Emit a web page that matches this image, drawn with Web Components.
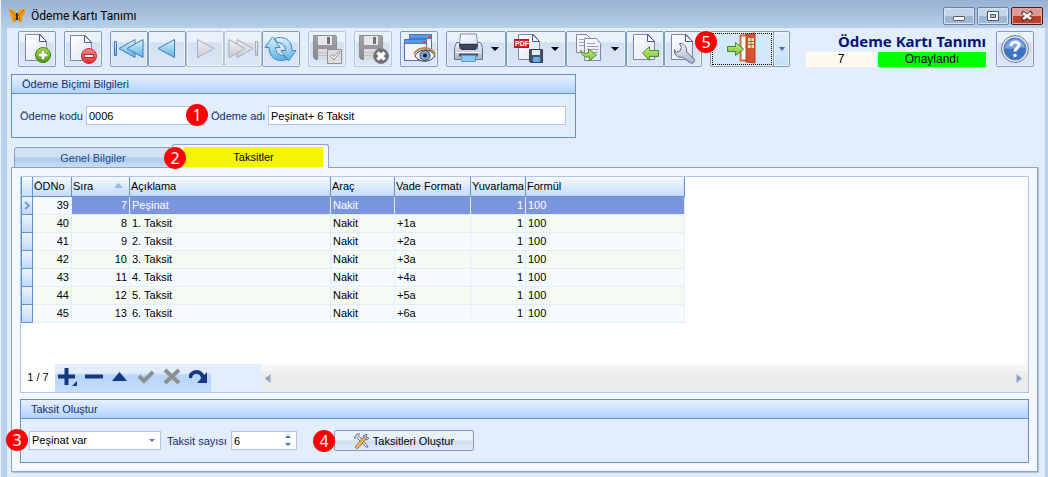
<!DOCTYPE html>
<html lang="tr">
<head>
<meta charset="utf-8">
<title>Ödeme Kartı Tanımı</title>
<style>
  body { margin: 0; background: #fff; font: 11px/14px "Liberation Sans", Arial, sans-serif; color: #000; }
</style>
</head>
<body>
<payment-card-window></payment-card-window>

<script>
const DEFS = `<defs>
  <linearGradient id="doc" x1="0" y1="0" x2="1" y2="1"><stop offset="0" stop-color="#fff"/><stop offset="1" stop-color="#dfe4f6"/></linearGradient>
  <linearGradient id="blue" x1="0" y1="0" x2="0" y2="1"><stop offset="0" stop-color="#dff3fd"/><stop offset="1" stop-color="#5cb0e6"/></linearGradient>
  <linearGradient id="gray" x1="0" y1="0" x2="0" y2="1"><stop offset="0" stop-color="#eceef1"/><stop offset="1" stop-color="#c9ced6"/></linearGradient>
  <linearGradient id="green" x1="0" y1="0" x2="0" y2="1"><stop offset="0" stop-color="#a6dd4e"/><stop offset="1" stop-color="#4a9a0c"/></linearGradient>
  <linearGradient id="leaf" x1="0" y1="0" x2="0" y2="1"><stop offset="0" stop-color="#c3e88a"/><stop offset="1" stop-color="#7fc03a"/></linearGradient>
  <linearGradient id="red" x1="0" y1="0" x2="0" y2="1"><stop offset="0" stop-color="#ff8d8d"/><stop offset="1" stop-color="#e8282c"/></linearGradient>
  <linearGradient id="steel" x1="0" y1="0" x2="0" y2="1"><stop offset="0" stop-color="#f1f3f9"/><stop offset="1" stop-color="#aab2c8"/></linearGradient>
  <linearGradient id="disk" x1="0" y1="0" x2="0" y2="1"><stop offset="0" stop-color="#a2a4a7"/><stop offset="1" stop-color="#87898c"/></linearGradient>
</defs>`;
const floppy = `<path d="M4.500 3.500h22l1 1v23h-21l-2-2z" fill="url(#disk)" stroke="#8c8e91"/><rect x="9" y="4" width="14" height="9" fill="#e6e7e8"/><rect x="18" y="5" width="3" height="7" fill="#6f7174"/><rect x="9" y="17" width="14" height="11" fill="#d9dadc"/><path d="M9 20.500h14M9 23.500h14" stroke="#bfc1c4"/>`;
const ICONS = {
  add: `<path d="M6.500 2.500h15l6 7v19h-21z" fill="url(#doc)" stroke="#7f84b3"/><path d="M20.500 2.500v7h7z" fill="#fff" stroke="#4c549c"/><circle cx="24" cy="23" r="7.500" fill="url(#green)" stroke="#3f7d12"/><path d="M24 18v10M19 23h10" stroke="#3f7d12" stroke-width="4"/><path d="M24 18.500v9M19.500 23h9" stroke="#fff" stroke-width="3"/>`,
  remove: `<path d="M5.500 3.500h15l6 7v18h-21z" fill="url(#doc)" stroke="#7f84b3"/><path d="M19.500 3.500v7h7z" fill="#fff" stroke="#4c549c"/><circle cx="24" cy="24" r="7.500" fill="url(#red)" stroke="#c52a30"/><rect x="19.500" y="22.500" width="9" height="3" fill="#fff" stroke="#c52a30"/>`,
  first: `<g stroke="#3f7cbc" fill="url(#blue)" stroke-linejoin="round"><rect x="3.500" y="9.500" width="2" height="14"/><path d="M24 7.500v18L8 16.500z"/><path d="M32 7.500v18L16 16.500z"/></g>`,
  prev: `<path d="M25.500 7.500v18L9 16.500z" stroke="#3f7cbc" fill="url(#blue)" stroke-linejoin="round"/>`,
  next: `<path d="M10.500 7.500v18L27 16.500z" stroke="#a9adb4" fill="url(#gray)" stroke-linejoin="round"/>`,
  last: `<g stroke="#a9adb4" fill="url(#gray)" stroke-linejoin="round"><rect x="30.500" y="9.500" width="2" height="14"/><path d="M12 7.500v18l16-9z"/><path d="M4 7.500v18l16-9z"/></g>`,
  refresh: `<g fill="url(#blue)" stroke="#3f86bd" stroke-linejoin="round"><path d="M9.500 5L17 15.500h-4.500c0 5 3.500 8 8 8l3 4C13 31 6 25 6 15.500H2z"/><path d="M25.500 29L18 18.500h4.500c0-5-3.500-8-8-8l-3-4C22 3 29 9 29 18.500h4z"/></g>`,
  saveok: floppy + `<rect x="18.500" y="17.500" width="14" height="14" fill="#dcdddf" stroke="#8f9194"/><path d="M21.500 24l3.500 4 6-8-1.500-.5-4.500 5-2-2z" fill="#fff" stroke="#8a8c8f"/>`,
  savex: floppy + `<circle cx="26" cy="24" r="7.500" fill="#6e7073" stroke="#85878a"/><path d="M22.500 20.500l7 7M29.500 20.500l-7 7" stroke="#fff" stroke-width="3.500"/>`,
  preview: `<g stroke="#5a6fb6"><rect x="8.500" y="2.500" width="22" height="16" fill="#edf3fc"/><path d="M8.500 2.500h22v4h-22z" fill="#4e9dec"/><rect x="3.500" y="7.500" width="22" height="21" fill="#f2f5fd"/><path d="M3.500 7.500h22v4h-22z" fill="#4e9dec"/></g><path d="M27 4h3v2h-3zM22 9h3v2h-3z" fill="#e94545"/><path d="M14 24c4-8 16-8 20 0-5 7-16 7-20 0z" fill="#f1f4fa" stroke="#2f3848"/><path d="M13 22c5-8 17-8 21 0" fill="none" stroke="#c28a4e" stroke-width="2"/><circle cx="24" cy="23.500" r="5" fill="#84a3c8" stroke="#33445c"/><circle cx="24" cy="23.500" r="2" fill="#152033"/>`,
  print: `<path d="M12.500 12l1-10h16l1 10z" fill="url(#doc)" stroke="#8188b5"/><path d="M9.500 10.500h3v6h18v-6h3l2 5v12h-28v-12z" fill="url(#steel)" stroke="#66708f"/><path d="M12.500 12.500h18l-2 5h-14z" fill="#3e465c" stroke="#2d354b"/><path d="M9 20.500h25" stroke="#fff"/><path d="M12 21.500h19v3h-19z" fill="#4e5873"/><path d="M14.500 23.500h14v6h-14z" fill="#88c8f2" stroke="#5c9ccd"/>`,
  pdf: `<path d="M11.500 2.500h15l6 7v18h-21z" fill="url(#doc)" stroke="#7f84b3"/><path d="M25.500 2.500v7h7z" fill="#fff" stroke="#4c549c"/><rect x="7.500" y="7.500" width="14" height="8" fill="#d3282f" stroke="#a91c22"/><text x="8" y="14" font-family="Liberation Sans" font-weight="700" font-size="7" fill="#fff">PDF</text><path d="M22.500 17.500h13v13h-12l-1-1z" fill="#47526a" stroke="#364057"/><rect x="25" y="18" width="8" height="5" fill="#e4eaf6"/><rect x="26" y="25" width="7" height="5" fill="#5eb0ee"/>`,
  copy: `<g stroke="#7f84b3" fill="url(#doc)"><path d="M9.500 2.500h10l5 5v13h-15z"/><path d="M17.500 6.500h12l4 5v17h-16z"/></g><path d="M12 7.500h6M12 10.500h5M12 13.500h5M20 11.500h8M20 14.500h11M20 17.500h11M20 20.500h11" stroke="#9ba2ca"/><path d="M13.500 18c2 3 5 4 8 3v-4l8 6-7 6v-4c-5 1-8-2-9-7z" fill="url(#leaf)" stroke="#568f26" stroke-linejoin="round"/>`,
  import: `<path d="M6.500 2.500h15l6 7v18h-21z" fill="url(#doc)" stroke="#7f84b3"/><path d="M20.500 2.500v7h7z" fill="#fff" stroke="#4c549c"/><path d="M15.500 21l7-6.500v4h9v6h-9v4z" fill="url(#leaf)" stroke="#568f26" stroke-linejoin="round"/>`,
  wrench: `<path d="M6.500 2.500h15l6 7v18h-21z" fill="url(#doc)" stroke="#7f84b3"/><path d="M20.500 2.500v7h7z" fill="#fff" stroke="#4c549c"/><path d="M14.500 11.500l2 4-1.500 3.500-4 1.500-1.500-3c-1 5 3 9 8 7.500l8 6c3 1 5-2 3.500-4l-7.500-7c1-5-3-9-7-8.500z" fill="url(#steel)" stroke="#5b6a8d" stroke-linejoin="round"/>`,
  exit: `<path d="M16.500 3.500h9v25h-9z" fill="#fdfdfd" stroke="#dd6540" stroke-width="2"/><path d="M22 2l9-1v30l-9-1z" fill="#d6532f" stroke="#b54122"/><rect x="24" y="6" width="6" height="10" fill="#f3e3ac"/><path d="M27 6v10M24 9.500h6M24 12.500h6" stroke="#94703f"/><path d="M3.500 14.500h8v-4l8 6.500-8 6.500v-4h-8z" fill="url(#leaf)" stroke="#3f8a2f" stroke-linejoin="round"/>`,
  help: `<circle cx="18" cy="17" r="13.500" fill="#dfe4ee" stroke="#717c96"/><circle cx="18" cy="17" r="11" fill="#3c74c4" stroke="#5f80b9"/><path d="M8 16a10 9 0 0 1 20 0c-6-3-14 3-20 0z" fill="#7ba6e0"/><path d="M14 14c0-5 8-5 8-1 0 3-4 3-4 6.500" fill="none" stroke="#fff" stroke-width="3"/><circle cx="18" cy="23.500" r="1.800" fill="#fff"/>`
};
const icon = name => `<svg width="36" height="34" viewBox="0 0 36 34" aria-hidden="true">${DEFS}${ICONS[name]}</svg>`;

function define(name, html) {
  const template = document.createElement('template');
  customElements.define(name, class extends HTMLElement {
    connectedCallback() {
      if (this.shadowRoot) return;
      template.innerHTML = typeof html === 'function' ? html(this) : html;
      this.attachShadow({ mode: 'open' }).append(template.content.cloneNode(true));
    }
  });
}

define('step-badge', `
<style>
  :host { position: absolute; z-index: 2; display: grid; place-items: center; width: 22px; height: 22px; border-radius: 50%; background: #f00; color: #fff; font: 16px/22px "Noto Sans", "Open Sans", sans-serif; }
</style><slot></slot>`);

define('title-bar', `
<style>
  :host { display: flex; align-items: center; height: 28px; box-sizing: border-box; padding: 4px 5px 0 8px; background: linear-gradient(#98b1d0, #b7cfe8); font: 12px/16px Roboto, "Noto Sans", sans-serif; }
  h1 { flex: 1; margin: 0 0 0 6px; font: inherit; }
  .controls { display: flex; gap: 2px; }
  button { width: 32px; height: 18px; padding: 0; border: 1px solid #6b84a5; border-radius: 2px; background: linear-gradient(#c4d5e9 48%, #9fb7d3 52%); box-shadow: inset 0 0 0 1px #d6e3f1; display: grid; place-items: center; }
  button.close { border-color: #511a22; background: linear-gradient(#dd9a90 48%, #b8402c 52%); box-shadow: inset 0 0 0 1px #e4a69c; }
</style>
<svg width="16" height="16" viewBox="0 0 16 16" aria-hidden="true"><path d="M0 1c4 0 7 2 7.500 6C8.500 3 12 1 16 1c0 4-1 7-3 8 1 3-1 5-2 6-1-1-2-3-3-5-1 2-2 4-3 5-2-1-3-3-2-6C1 8 0 5 0 1z" fill="#f39a10"/><path d="M1 2l6 6M15 2L9 8M5 9l2 4M11 9l-1 4" stroke="#b0660f"/><path d="M8 5v7" stroke="#4a2a14" stroke-width="2"/></svg>
<h1><slot></slot></h1>
<div class="controls">
  <button aria-label="Simge durumuna küçült"><svg width="12" height="12"><rect x=".5" y="6.500" width="11" height="4" rx="1" fill="#fff" stroke="#4b5664"/></svg></button>
  <button aria-label="Ekranı kapla"><svg width="12" height="12"><path d="M.5 1.500h11v9h-11z" fill="#fff" stroke="#4b5664"/><path d="M3.500 4.500h5v3h-5z" fill="#a9bdd6" stroke="#4b5664"/></svg></button>
  <button class="close" aria-label="Kapat"><svg width="12" height="12"><path d="M1 2l10 8M11 2L1 10" stroke="#543238" stroke-width="4"/><path d="M2 3l8 6M10 3L2 9" stroke="#fff" stroke-width="2.500"/></svg></button>
</div>`);

define('tool-button', el => `
<style>
  :host { display: flex; flex: none; }
  button { display: flex; align-items: center; width: 38px; height: 36px; box-sizing: border-box; padding: 0; border: 1px solid #7e9bc6; border-radius: 2px; background: linear-gradient(#e9f1fa 28%, #d2e0f2 32%, #dbe7f7); box-shadow: inset 0 0 0 1px #edf4fc; }
  button:disabled { border-color: #b3c5df; }
  svg { flex: none; }
  :host([menu]) button { width: 60px; }
  :host([split]) button { width: 64px; background: #d4e8fc; outline: 1px dotted #000; outline-offset: -3px; border-radius: 2px 0 0 2px; justify-content: center; }
  :host([split]) button.drop { width: 17px; outline: 0; margin-left: -1px; background: linear-gradient(#e2f0fe, #c3def9); border-radius: 0 2px 2px 0; }
  .tri { margin-left: 8px; }
  .drop .tri { margin: 0; }
</style>
<button aria-label="${el.getAttribute('label')}" title="${el.getAttribute('label')}" ${el.hasAttribute('off') ? 'disabled' : ''}>${icon(el.getAttribute('icon'))}${el.hasAttribute('menu') ? '<svg class="tri" width="8" height="4" aria-hidden="true"><path d="M0 0h8L4 4z"/></svg>' : ''}</button>
${el.hasAttribute('split') ? '<button class="drop" aria-label="Çıkış seçenekleri"><svg class="tri" width="6" height="4" aria-hidden="true"><path d="M0 0h6L3 4z" fill="#4a6a9e"/></svg></button>' : ''}`);

define('main-toolbar', `
<style>
  :host { display: flex; gap: 8px; }
  .set { display: flex; }
  .exit { position: relative; }
  .exit step-badge { left: -15px; top: 0; }
</style>
<tool-button icon="add" label="Yeni"></tool-button>
<tool-button icon="remove" label="Sil"></tool-button>
<div class="set">
  <tool-button icon="first" label="İlk"></tool-button><tool-button icon="prev" label="Önceki"></tool-button><tool-button icon="next" label="Sonraki" off></tool-button><tool-button icon="last" label="Son" off></tool-button><tool-button icon="refresh" label="Yenile"></tool-button>
</div>
<tool-button icon="saveok" label="Kaydet" off></tool-button>
<tool-button icon="savex" label="Vazgeç" off></tool-button>
<tool-button icon="preview" label="Önizle"></tool-button>
<div class="set">
  <tool-button icon="print" label="Yazdır" menu></tool-button><tool-button icon="pdf" label="PDF kaydet" menu></tool-button><tool-button icon="copy" label="Kopyala" menu></tool-button><tool-button icon="import" label="İçe aktar"></tool-button><tool-button icon="wrench" label="Ayarlar"></tool-button>
</div>
<div class="exit"><tool-button icon="exit" label="Çıkış" split></tool-button><step-badge>5</step-badge></div>`);

define('record-status', `
<style>
  :host { display: grid; grid-template-columns: 70px 108px; gap: 0 2px; line-height: 15px; font-size: 12px; text-align: center; }
  h2 { grid-column: 1 / 3; margin: 0; height: 21px; font: bold 15px/21px "Noto Sans", "Open Sans", sans-serif; color: #001478; text-align: right; white-space: nowrap; }
  .no { background: #fffaf0; }
  .state { background: #0f0; }
</style>
<h2><slot></slot></h2>
<span class="no">7</span><span class="state">Onaylandı</span>`);

define('group-box', `
<style>
  :host { display: block; box-sizing: border-box; border: 1px solid #6592cf; background: #e2edfe; }
  h3 { margin: 0; height: 18px; padding-left: 10px; border-bottom: 1px solid #6592cf; font: inherit; line-height: 19px; color: #12306f; background: linear-gradient(#e5f0ff, #d0e3ff 45%, #b0d2ff); }
  .body { display: flex; align-items: center; height: 43px; box-sizing: border-box; }
</style>
<h3><slot name="title"></slot></h3>
<div class="body"><slot></slot></div>`);

const fieldCss = `
  :host { display: flex; align-items: center; position: relative; color: #12306f; }
  label { white-space: nowrap; flex: none; width: var(--label-width, auto); }
  input, select { box-sizing: border-box; width: 100%; height: 19px; margin: 0; padding: 0 2px; border: 1px solid #b0c6e6; border-radius: 0; background: #fff; color: #000; font: inherit; line-height: 17px; appearance: none; outline: 0; }
  input[type=number] { appearance: textfield; }
  input::-webkit-inner-spin-button { appearance: none; }
  .control { position: relative; flex: 1; display: flex; }
  .control svg { position: absolute; right: 6px; top: 3px; pointer-events: none; }
`;
define('text-field', el => `
<style>${fieldCss}</style>
<label for="f">${el.getAttribute('label')}</label><span class="control"><input id="f" value="${el.getAttribute('value')}"></span><slot></slot>`);

define('choice-field', el => `
<style>${fieldCss}</style>
<span class="control"><select aria-label="Peşinat"><option>${el.getAttribute('value')}</option></select>
<svg width="6" height="13"><path d="M0 5h6L3 8z" fill="#5277ae"/></svg></span><slot></slot>`);

define('number-field', el => `
<style>${fieldCss}</style>
<label for="n">${el.getAttribute('label')}</label><span class="control"><input id="n" type="number" value="${el.getAttribute('value')}">
<svg width="6" height="13"><path d="M0 4h6L3 1zM0 9h6l-3 3z" fill="#4f6f9f"/></svg></span>`);

define('action-button', `
<style>
  :host { display: block; position: relative; }
  button { display: flex; align-items: center; justify-content: center; gap: 3px; width: 100%; height: 21px; padding: 0; border: 1px solid #7f9bc4; border-radius: 2px; background: linear-gradient(#e8f0fa 45%, #d2e0f3 55%, #dfeafa); font: inherit; color: #000; white-space: nowrap; }
</style>
<button><svg width="16" height="16" viewBox="0 0 16 16" aria-hidden="true"><path d="M2 2l3 1 8 9 1 2-2 0-9-9z" fill="#dde2ea" stroke="#6c7585"/><path d="M1 6c-1-3 2-6 5-5M9 3l4-2-1 3 3 1-2 2-3-1z" fill="#c5cbd6" stroke="#6c7585"/><path d="M10 6L3 14" stroke="#a0692c" stroke-width="3.600" stroke-linecap="round"/><path d="M10 6L3 14" stroke="#f2bb6a" stroke-width="2" stroke-linecap="round"/></svg><slot></slot></button><slot name="badge"></slot>`);

define('page-tabs', `
<style>
  :host { display: flex; flex-direction: column; position: relative; }
  .strip { display: flex; align-items: flex-end; height: 24px; padding-left: 3px; margin-bottom: -1px; position: relative; z-index: 1; }
  button { font: inherit; box-sizing: border-box; padding: 0; border: 1px solid #8da2c6; border-radius: 3px 3px 0 0; color: #1f4894; width: 158px; height: 21px; background: linear-gradient(#d0e1f6 45%, #adcaec 55%, #c9dcf4); }
  button.on { width: 157px; height: 24px; padding: 2px 5px 1px 11px; border-bottom: 0; background: #f3f8fe; color: #000; }
  .on span { display: block; height: 20px; line-height: 20px; background: #f5f500; }
  .page { display: flex; flex-direction: column; gap: 6px; flex: 1; border: 1px solid #8da2c6; padding: 8px; background: #f3f8fe; box-shadow: 1px 1px 1px #b4c5df; }
  step-badge { left: 153px; top: 3px; }
</style>
<div class="strip" role="tablist"><button role="tab" aria-selected="false">Genel Bilgiler</button><button class="on" role="tab" aria-selected="true"><span>Taksitler</span></button></div>
<step-badge>2</step-badge>
<div class="page" role="tabpanel"><slot></slot></div>`);

const ROWS = [
  [39, 7, 'Peşinat', ''], [40, 8, '1. Taksit', '+1a'], [41, 9, '2. Taksit', '+2a'], [42, 10, '3. Taksit', '+3a'],
  [43, 11, '4. Taksit', '+4a'], [44, 12, '5. Taksit', '+5a'], [45, 13, '6. Taksit', '+6a']
];
define('installment-grid', `
<style>
  :host { display: flex; flex-direction: column; flex: 1; border: 1px solid #b0c6e6; background: #fff; }
  .scroll { flex: 1; overflow: hidden; }
  table { table-layout: fixed; width: 664px; border-collapse: separate; border-spacing: 0; }
  th, td { box-sizing: border-box; height: 18px; padding: 0 2px; line-height: 17px; white-space: nowrap; text-align: left; border-right: 1px solid #e2edfe; border-bottom: 1px solid #e2edfe; }
  thead th { height: 20px; padding: 0 1px; line-height: 19px; font-weight: 400; border-color: #6592cf; background: linear-gradient(#f4f9ff, #dcebff 50%, #c5dcfa); }
  th.sort { position: relative; }
  th.sort svg { position: absolute; right: 6px; top: 6px; }
  tbody th { padding: 0; border-color: #6592cf; background: linear-gradient(#eef5ff, #bfd9fb); }
  tbody th svg { display: block; margin: auto; }
  tr > :first-child { border-left: 1px solid #6592cf; }
  .num { text-align: right; }
  tbody tr { background: #f6fbff; }
  tbody tr:nth-child(even) { background: #f4fbf3; }
  .sel td:nth-child(n+3) { background: #7b96df; color: #fff; }
  footer { display: flex; align-items: stretch; height: 28px; }
  .pos { width: 34px; text-align: center; line-height: 27px; }
  .nav { display: flex; width: 206px; padding-bottom: 2px; box-sizing: border-box; background: linear-gradient(90deg, transparent 156px, #e2edfe 156px), linear-gradient(#e2edfe 30%, #b8d4fa 42%, #c6dcfa); }
  .nav button { width: 26px; padding: 0; border: 0; background: none; display: grid; place-items: center; }
  .bar { flex: 1; display: flex; align-items: center; justify-content: space-between; padding: 0 6px 0 4px; background: linear-gradient(#f8f8f8, #ebebeb 40%); }
</style>
<div class="scroll"><table>
<colgroup><col style="width:12px"><col style="width:39px"><col style="width:58px"><col style="width:201px"><col style="width:64px"><col style="width:76px"><col style="width:55px"><col style="width:159px"></colgroup>
<thead><tr><th></th><th>ÖDNo</th><th class="sort">Sıra<svg width="9" height="5" aria-hidden="true"><path d="M0 5h9L4.500 0z" fill="#8fbaf2"/></svg></th><th>Açıklama</th><th>Araç</th><th>Vade Formatı</th><th>Yuvarlama</th><th>Formül</th></tr></thead>
<tbody>${ROWS.map((r, i) => `<tr class="${i ? '' : 'sel'}"><th>${i ? '' : '<svg width="6" height="9" aria-hidden="true"><path d="M1 1l4 3.500L1 8" fill="none" stroke="#6c9ade" stroke-width="2"/></svg>'}</th><td class="num">${r[0]}</td><td class="num">${r[1]}</td><td>${r[2]}</td><td>Nakit</td><td>${r[3]}</td><td class="num">1</td><td>100</td></tr>`).join('')}</tbody>
</table></div>
<footer>
  <span class="pos">1 / 7</span>
  <div class="nav">
    <button aria-label="Ekle"><svg width="20" height="18"><path d="M8.500 0v17M0 8.500h17" stroke="#14387f" stroke-width="4"/><path d="M19 13v5h-5z" fill="#14387f"/></svg></button>
    <button aria-label="Sil"><svg width="18" height="18"><path d="M0 8.500h18" stroke="#14387f" stroke-width="4"/></svg></button>
    <button aria-label="Düzenle"><svg width="16" height="18"><path d="M0 13h15L7.500 4z" fill="#14387f"/></svg></button>
    <button aria-label="Onayla"><svg width="18" height="18"><path d="M2 8l5 5 9-9" fill="none" stroke="#8f9090" stroke-width="4"/></svg></button>
    <button aria-label="İptal"><svg width="18" height="18"><path d="M2 2l14 13M16 2L2 15" stroke="#8f9090" stroke-width="4"/></svg></button>
    <button aria-label="Yenile"><svg width="19" height="18"><path d="M1 10c1-8 12-8 13 0" fill="none" stroke="#14387f" stroke-width="4"/><path d="M18 4v11H8z" fill="#14387f"/></svg></button>
  </div>
  <div class="bar"><svg width="6" height="9" aria-hidden="true"><path d="M5.500 0v9L0 4.500z" fill="#93a3c8"/></svg><svg width="6" height="9" aria-hidden="true"><path d="M.5 0v9L6 4.500z" fill="#93a3c8"/></svg></div>
</footer>`);

define('payment-card-window', `
<style>
  :host { display: flex; flex-direction: column; min-height: 100vh; box-sizing: border-box; border-left: 1px solid #eef3f9; background: #bad1ea; }
  main { flex: 1; display: flex; flex-direction: column; margin: 0 3px 0 6px; padding: 3px 7px 5px 4px; background: #e2edfe; }
  header { display: flex; padding: 0 4px 0 7px; margin-bottom: 7px; }
  record-status { margin: 0 10px 0 auto; flex: none; }
  .info { width: 565px; max-width: 100%; margin-bottom: 6px; }
  .code { width: 185px; margin-left: 8px; --label-width: 66px; }
  .code step-badge { right: -3px; top: -2px; }
  .name { flex: 1; margin: 0 9px 0 6px; --label-width: 57px; }
  page-tabs { flex: 1; }
  .plan { width: 132px; margin-left: 8px; }
  .plan step-badge { left: -23px; top: -2px; }
  .count { width: 130px; margin-left: 6px; --label-width: 64px; }
  action-button { width: 140px; margin-left: 37px; }
  action-button step-badge { left: -21px; top: 0; }
</style>
<title-bar>Ödeme Kartı Tanımı</title-bar>
<main>
  <header><main-toolbar></main-toolbar><record-status>Ödeme Kartı Tanımı</record-status><tool-button icon="help" label="Yardım"></tool-button></header>
  <group-box class="info"><span slot="title">Ödeme Biçimi Bilgileri</span>
    <text-field class="code" label="Ödeme kodu" value="0006"><step-badge>1</step-badge></text-field>
    <text-field class="name" label="Ödeme adı" value="Peşinat+ 6 Taksit"></text-field>
  </group-box>
  <page-tabs>
    <installment-grid></installment-grid>
    <group-box><span slot="title">Taksit Oluştur</span>
      <choice-field class="plan" value="Peşinat var"><step-badge>3</step-badge></choice-field>
      <number-field class="count" label="Taksit sayısı" value="6"></number-field>
      <action-button>Taksitleri Oluştur<step-badge slot="badge">4</step-badge></action-button>
    </group-box>
  </page-tabs>
</main>`);
</script>
</body>
</html>
